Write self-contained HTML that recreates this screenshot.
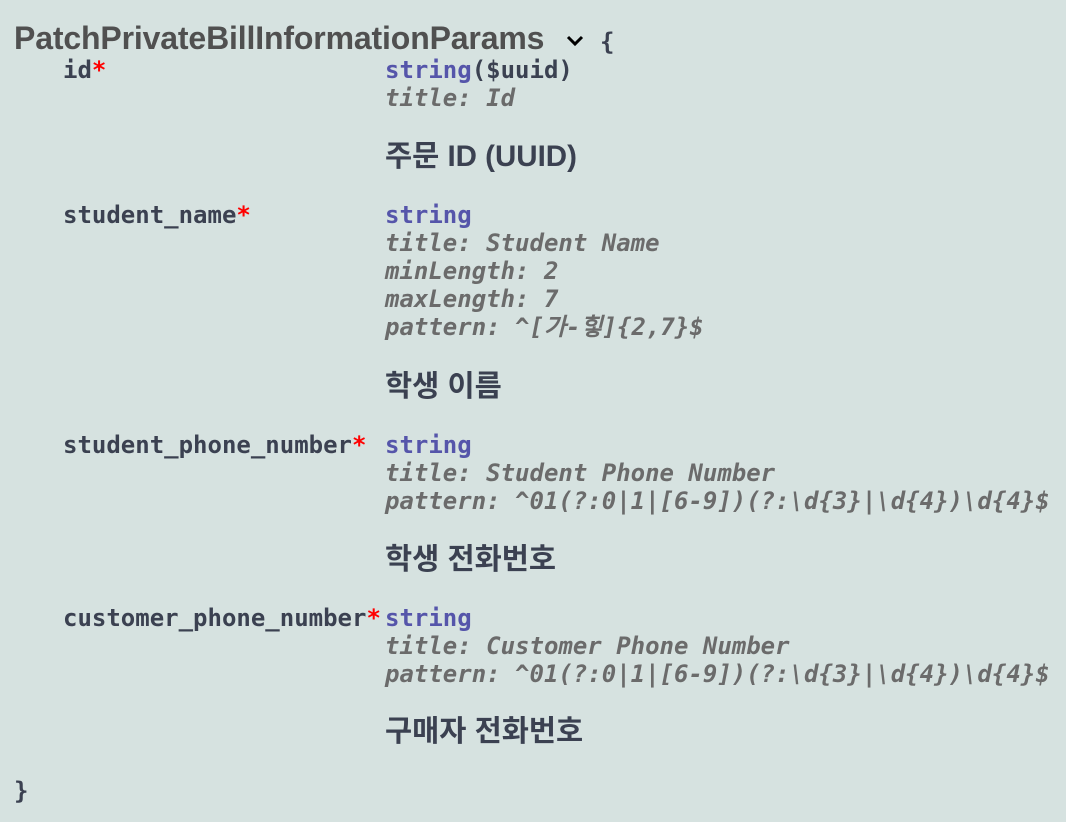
<!DOCTYPE html>
<html><head><meta charset="utf-8"><style>
body{margin:0;width:1066px;height:822px;background:#d6e2e0;overflow:hidden;position:relative}
div{position:absolute;white-space:pre;line-height:28px}
.m{font-family:"DejaVu Sans Mono","Liberation Mono",monospace;font-weight:bold;font-size:24px;color:#3b4151}
.n{left:63px}
.t{left:385px}
.ty{color:#55a}
.i{font-style:italic;color:#6b6b6b}
.r{color:#f00}
.d{left:385px;font-family:"Liberation Sans","Noto Sans CJK KR",sans-serif;font-weight:bold;font-size:29.5px;line-height:34px;color:#3b4151}
</style></head><body>
<div style="left:14px;top:20px;line-height:36px;font-family:'Liberation Sans',sans-serif;font-weight:bold;font-size:32px;color:#505050;letter-spacing:-0.15px">PatchPrivateBillInformationParams</div>
<svg style="position:absolute;left:565px;top:34px" width="20" height="14" viewBox="0 0 20 14"><path d="M3 3 L10 10 L17 3" fill="none" stroke="#000" stroke-width="3"/></svg>
<div class="m" style="left:600px;top:28px">{</div>

<div class="m n" style="top:56px">id<span class="r">*</span></div>
<div class="m t" style="top:56px"><span class="ty">string</span>($uuid)</div>
<div class="m t i" style="top:84px">title: Id</div>
<div class="d" style="top:140px">주문 ID (UUID)</div>

<div class="m n" style="top:201px">student_name<span class="r">*</span></div>
<div class="m t ty" style="top:201px">string</div>
<div class="m t i" style="top:229px">title: Student Name</div>
<div class="m t i" style="top:257px">minLength: 2</div>
<div class="m t i" style="top:285px">maxLength: 7</div>
<div class="m t i" style="top:313px">pattern: ^[가-힣]{2,7}$</div>
<div class="d" style="top:370px">학생 이름</div>

<div class="m n" style="top:431px">student_phone_number<span class="r">*</span></div>
<div class="m t ty" style="top:431px">string</div>
<div class="m t i" style="top:459px">title: Student Phone Number</div>
<div class="m t i" style="top:487px">pattern: ^01(?:0|1|[6-9])(?:\d{3}|\d{4})\d{4}$</div>
<div class="d" style="top:543px">학생 전화번호</div>

<div class="m n" style="top:604px">customer_phone_number<span class="r">*</span></div>
<div class="m t ty" style="top:604px">string</div>
<div class="m t i" style="top:632px">title: Customer Phone Number</div>
<div class="m t i" style="top:660px">pattern: ^01(?:0|1|[6-9])(?:\d{3}|\d{4})\d{4}$</div>
<div class="d" style="top:715px">구매자 전화번호</div>

<div class="m" style="left:14px;top:777px">}</div>
</body></html>
